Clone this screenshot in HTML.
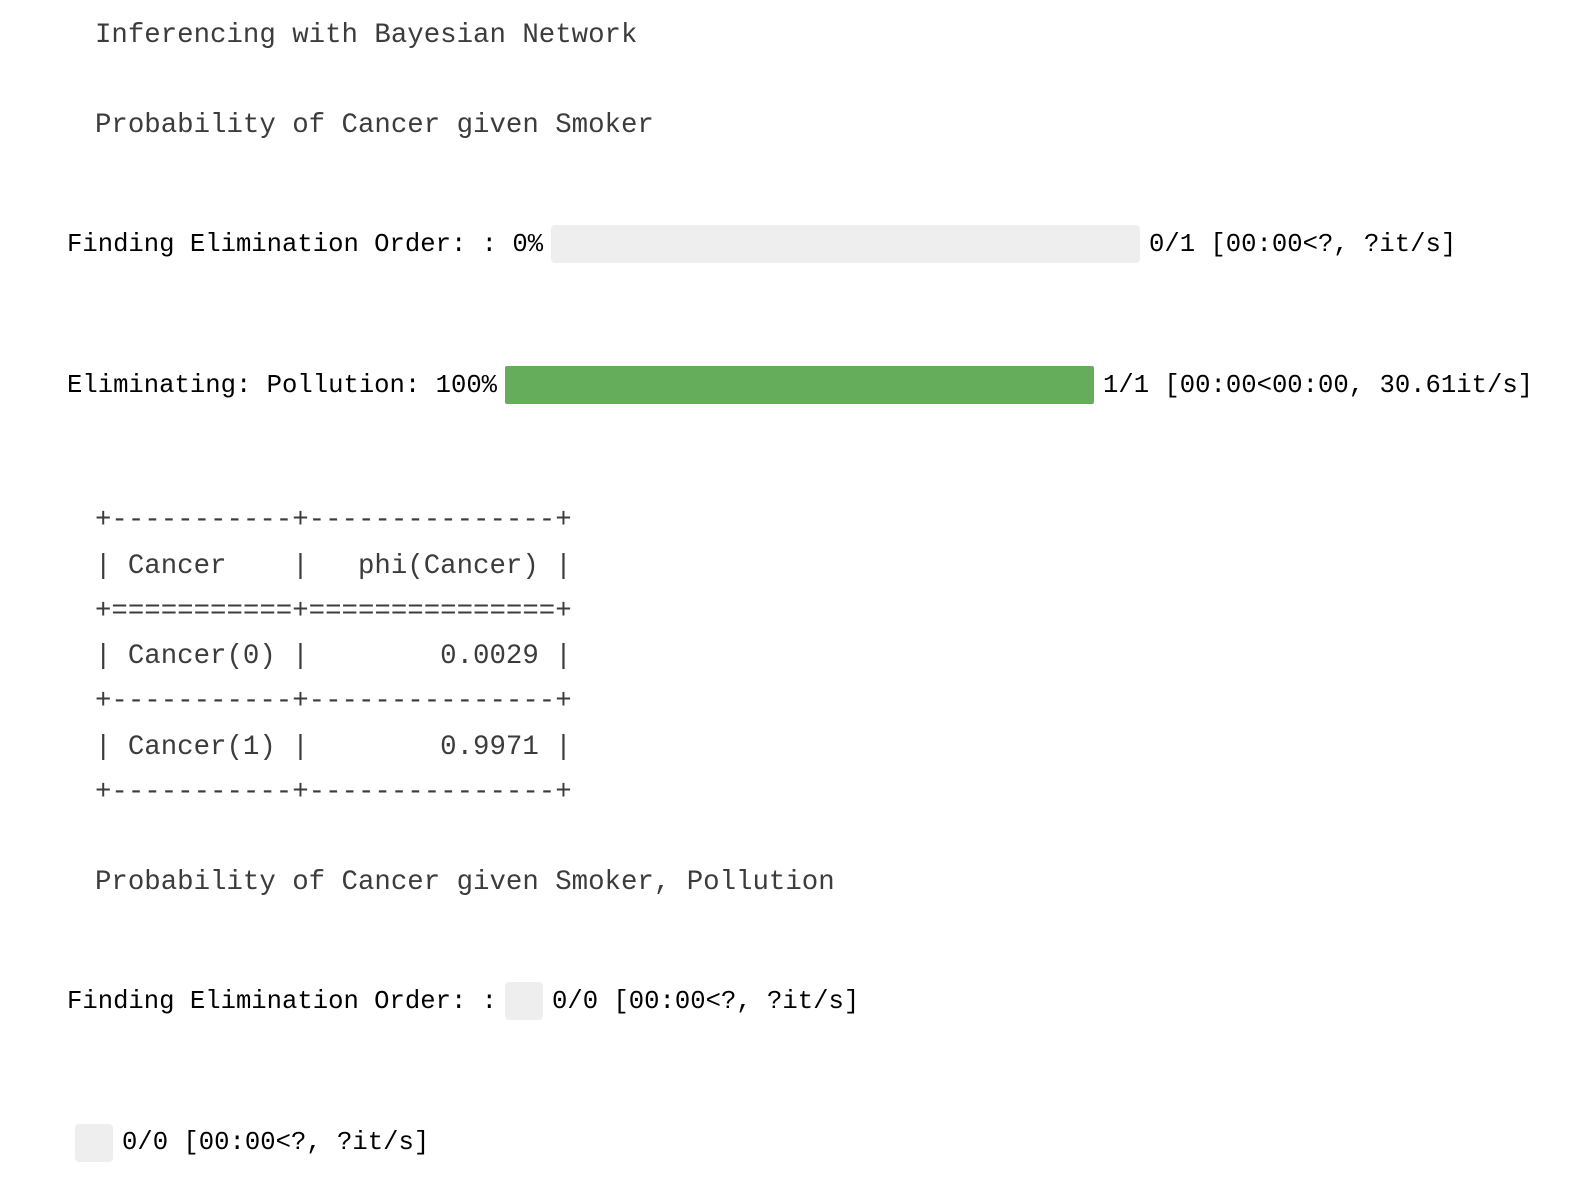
<!DOCTYPE html>
<html><head><meta charset="utf-8"><style>
html,body{margin:0;padding:0;background:#fff;width:1594px;height:1198px;overflow:hidden;position:relative}
.o{position:absolute;left:95px;font-family:"Liberation Mono",monospace;font-size:27.4px;color:#3c3c3c;white-space:pre;line-height:40px}
.p{position:absolute;font-family:"Liberation Mono",monospace;font-size:25.6px;color:#000;white-space:pre;line-height:40px}
.bar{position:absolute;background:#eeeeee;border-radius:4px;height:38px}
.g{background:#66ad5b;border-radius:2px}
</style></head><body>
<div class="o" style="top:16px">Inferencing with Bayesian Network</div>
<div class="o" style="top:106px">Probability of Cancer given Smoker</div>
<div class="p" style="left:67px;top:225px">Finding Elimination Order: : 0%</div>
<div class="bar" style="left:551px;top:225px;width:589px"></div>
<div class="p" style="left:1149px;top:225px">0/1 [00:00&lt;?, ?it/s]</div>
<div class="p" style="left:67px;top:366px">Eliminating: Pollution: 100%</div>
<div class="bar g" style="left:505px;top:366px;width:589px"></div>
<div class="p" style="left:1103px;top:366px">1/1 [00:00&lt;00:00, 30.61it/s]</div>
<div class="o" style="top:501px">+-----------+---------------+</div>
<div class="o" style="top:547px">| Cancer    |   phi(Cancer) |</div>
<div class="o" style="top:592px">+===========+===============+</div>
<div class="o" style="top:637px">| Cancer(0) |        0.0029 |</div>
<div class="o" style="top:682px">+-----------+---------------+</div>
<div class="o" style="top:728px">| Cancer(1) |        0.9971 |</div>
<div class="o" style="top:773px">+-----------+---------------+</div>
<div class="o" style="top:863px">Probability of Cancer given Smoker, Pollution</div>
<div class="p" style="left:67px;top:982px">Finding Elimination Order: :</div>
<div class="bar" style="left:505px;top:982px;width:38px"></div>
<div class="p" style="left:552px;top:982px">0/0 [00:00&lt;?, ?it/s]</div>
<div class="bar" style="left:75px;top:1124px;width:38px"></div>
<div class="p" style="left:122px;top:1123px">0/0 [00:00&lt;?, ?it/s]</div>
</body></html>
